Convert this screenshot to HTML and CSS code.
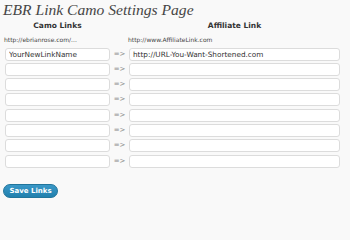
FILE: index.html
```html
<!DOCTYPE html>
<html>
<head>
<meta charset="utf-8">
<link rel="stylesheet" href="styles.css">
</head>
<body>
<div class="wrap">
  <h2 class="title">EBR Link Camo Settings Page</h2>
  <div class="grid">
    <div class="head">Camo Links</div>
    <div></div>
    <div class="head">Affiliate Link</div>
    <div class="hint">http://ebrianrose.com/...</div>
    <div></div>
    <div class="hint">http://www.AffiliateLink.com</div>

    <input class="field" value="YourNewLinkName"><span class="arrow">=&gt;</span><input class="field" value="http://URL-You-Want-Shortened.com">
    <input class="field"><span class="arrow">=&gt;</span><input class="field">
    <input class="field"><span class="arrow">=&gt;</span><input class="field">
    <input class="field"><span class="arrow">=&gt;</span><input class="field">
    <input class="field"><span class="arrow">=&gt;</span><input class="field">
    <input class="field"><span class="arrow">=&gt;</span><input class="field">
    <input class="field"><span class="arrow">=&gt;</span><input class="field">
    <input class="field"><span class="arrow">=&gt;</span><input class="field">
  </div>
  <button class="save">Save Links</button>
</div>
</body>
</html>
```
FILE: styles.css
```css
html, body {
  margin: 0;
  padding: 0;
  background: #f9f9f9;
}
.wrap {
  width: 350px;
  height: 202px;
  overflow: hidden;
  padding: 0 0 0 3px;
  box-sizing: border-box;
}
.title {
  margin: 0;
  padding-top: 1px;
  height: 21px;
  box-sizing: border-box;
  font-family: "Liberation Serif", serif;
  font-style: italic;
  font-weight: normal;
  font-size: 15.6px;
  line-height: 18px;
  color: #464646;
}
.grid {
  display: grid;
  grid-template-columns: 105px 19px 211px;
  margin-left: 2px;
  row-gap: 2.3px;
  font-family: "DejaVu Sans", sans-serif;
}
.head {
  font-weight: bold;
  font-size: 7.5px;
  color: #333;
  text-align: center;
  line-height: 10px;
  height: 12px;
}
.hint {
  font-size: 6px;
  color: #444;
  line-height: 9px;
  margin-left: -1px;
  height: 10px;
}
.field {
  box-sizing: border-box;
  height: 13px;
  margin: 0;
  padding: 0 3px;
  border: 1px solid #dcdcdc;
  border-radius: 3px;
  background: #fff;
  font-family: "DejaVu Sans", sans-serif;
  font-size: 7.3px;
  color: #333;
  outline: none;
}
.arrow {
  font-size: 7px;
  color: #888;
  line-height: 13px;
  text-align: center;
}
.save {
  display: block;
  margin-top: 16px;
  width: 55px;
  height: 14px;
  padding: 0;
  border: 1px solid #21759b;
  border-radius: 8px;
  background: linear-gradient(#3a98c8, #2180ad);
  color: #fff;
  font-family: "DejaVu Sans", sans-serif;
  font-weight: bold;
  font-size: 7px;
  line-height: 12px;
}
```
